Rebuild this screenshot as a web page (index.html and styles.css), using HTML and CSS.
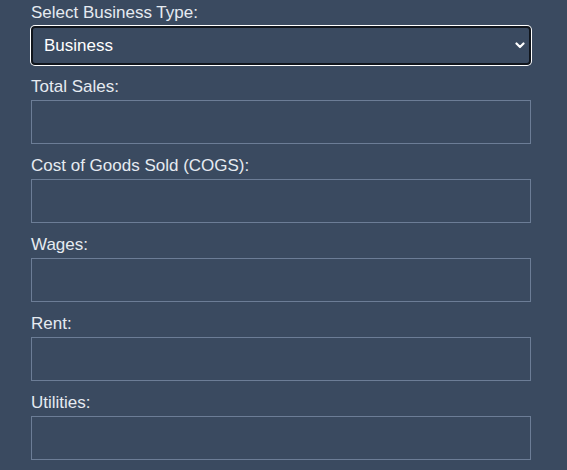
FILE: index.html
```html
<!DOCTYPE html>
<html lang="en">
<head>
    <meta charset="UTF-8">
    <meta name="viewport" content="width=device-width, initial-scale=1.0">
    <title>Business Expenses</title>
    <link rel="stylesheet" href="styles.css">
</head>
<body>
    <div class="container">
        <div class="field">
            <label for="businessType">Select Business Type:</label>
            <div class="select-wrap">
                <select id="businessType" class="select">
                    <option>Business</option>
                    <option>Personal</option>
                </select>
                <svg class="chevron" width="10" height="7" viewBox="0 0 10 7">
                    <path d="M1.5 1.5 L5 5 L8.5 1.5" fill="none" stroke="#fff" stroke-width="2.2" stroke-linecap="round" stroke-linejoin="round"/>
                </svg>
            </div>
        </div>

        <div class="field">
            <label for="sales">Total Sales:</label>
            <input type="number" id="sales">
        </div>

        <div class="field">
            <label for="cogs">Cost of Goods Sold (COGS):</label>
            <input type="number" id="cogs">
        </div>

        <div class="field">
            <label for="wages">Wages:</label>
            <input type="number" id="wages">
        </div>

        <div class="field">
            <label for="rent">Rent:</label>
            <input type="number" id="rent">
        </div>

        <div class="field">
            <label for="utilities">Utilities:</label>
            <input type="number" id="utilities">
        </div>
    </div>
</body>
</html>
```

FILE: styles.css
```css
* {
    margin: 0;
    padding: 0;
    box-sizing: border-box;
}

body {
    font-family: 'Liberation Sans', Arial, sans-serif;
    background: #3a4a60;
    color: #e6ebf1;
    min-height: 100vh;
}

.container {
    width: 500px;
    margin-left: 31px;
    padding-top: 3px;
}

.field {
    margin-bottom: 12px;
}

label {
    display: block;
    font-size: 17px;
    line-height: 20px;
    margin-bottom: 3px;
}

.select-wrap {
    position: relative;
}

.select {
    appearance: none;
    -webkit-appearance: none;
    display: block;
    width: 100%;
    height: 39px;
    padding: 0 11px;
    font-family: inherit;
    font-size: 17px;
    color: #fff;
    background: #3a4a60;
    border: 2px solid #10151c;
    border-radius: 4px;
    box-shadow: 0 0 0 1px #fff;
    outline: none;
}

.chevron {
    position: absolute;
    right: 6px;
    top: 16px;
}

input {
    display: block;
    width: 100%;
    height: 44px;
    padding: 0 10px;
    font-family: inherit;
    font-size: 17px;
    color: #fff;
    background: transparent;
    border: 1px solid #6c7d96;
    border-radius: 0;
    outline: none;
}
```
